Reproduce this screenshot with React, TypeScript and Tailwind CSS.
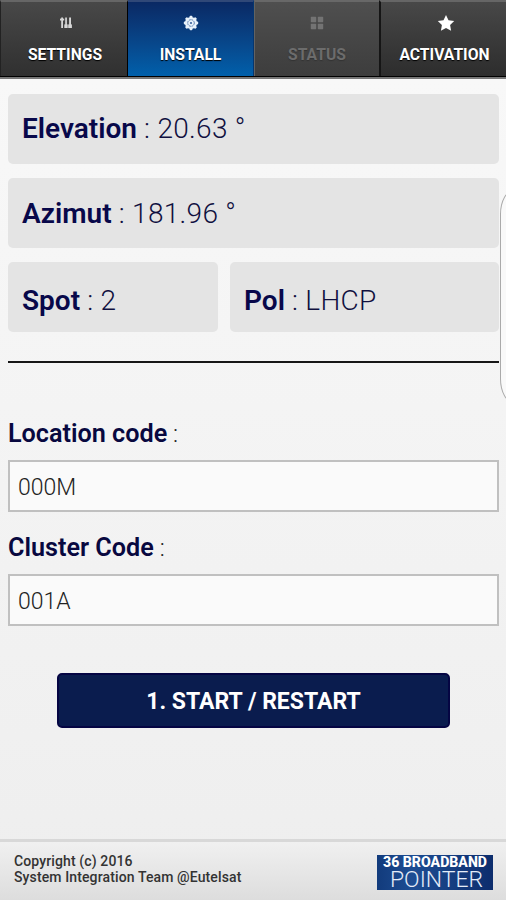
import type { ReactNode } from 'react';

function SlidersIcon() {
  return (
    <svg viewBox="0 0 12 12" className="ml-0.5 size-3" fill="#d6d6d6">
      <rect x="1.2" y="0.5" width="1.8" height="10.5" />
      <rect x="0" y="1.6" width="4.2" height="1.9" />
      <rect x="5.2" y="0.5" width="1.7" height="10.5" />
      <rect x="4.3" y="7.4" width="3.4" height="3.6" />
      <rect x="9.1" y="0.5" width="1.9" height="10.5" />
      <rect x="8.2" y="7.4" width="3.7" height="3.6" />
    </svg>
  );
}

function GearIcon() {
  return (
    <svg viewBox="0 0 16 16" className="size-4">
      <g fill="#e8f2fb">
        <circle cx="8" cy="8" r="6.1" />
        <rect x="6.6" y="0.8" width="2.8" height="14.4" rx="0.8" />
        <rect x="6.6" y="0.8" width="2.8" height="14.4" rx="0.8" transform="rotate(45 8 8)" />
        <rect x="6.6" y="0.8" width="2.8" height="14.4" rx="0.8" transform="rotate(90 8 8)" />
        <rect x="6.6" y="0.8" width="2.8" height="14.4" rx="0.8" transform="rotate(135 8 8)" />
      </g>
      <circle cx="8" cy="8" r="3.3" fill="none" stroke="#4c72a8" strokeWidth="0.9" strokeDasharray="1.9 0.7" />
      <circle cx="8" cy="8" r="1.1" fill="#3a629d" />
    </svg>
  );
}

function GridIcon() {
  return (
    <svg viewBox="0 0 14 14" className="size-3.5" fill="#737373">
      <rect x="0.8" y="0.8" width="5.4" height="5.4" rx="0.6" />
      <rect x="7.8" y="0.8" width="5.4" height="5.4" rx="0.6" />
      <rect x="0.8" y="7.8" width="5.4" height="5.4" rx="0.6" />
      <rect x="7.8" y="7.8" width="5.4" height="5.4" rx="0.6" />
    </svg>
  );
}

function StarIcon() {
  return (
    <svg viewBox="0 0 18 18" className="ml-0.5 size-[18px]" fill="#fff">
      <path d="M9 1l2.5 5.2 5.7.8-4.1 4 1 5.7L9 14l-5.1 2.7 1-5.7-4.1-4 5.7-.8z" />
    </svg>
  );
}

function Tab({ icon, label, className }: { icon: ReactNode; label: string; className: string }) {
  return (
    <div className={`flex h-full flex-col items-center border-t-2 pt-3 ${className}`}>
      <div className="flex h-[18px] items-center justify-center">{icon}</div>
      <span className="mt-3 text-[15.7px] leading-[22px] font-bold whitespace-nowrap">{label}</span>
    </div>
  );
}

function Card({ label, value, className }: { label: string; value: string; className?: string }) {
  return (
    <div className={`flex h-[69.5px] items-center rounded-[5px] bg-[#e4e4e4] px-3.5 text-[28px] leading-8 whitespace-pre text-[#10103f] ${className}`}>
      <span className="font-semibold text-[#08084a]">{label}</span>
      <span className="font-light tracking-[0.3px]"> : {value}</span>
    </div>
  );
}

function Field({ label, value }: { label: string; value: string }) {
  return (
    <label className="block">
      <span className="block h-[42px] text-[25.2px] leading-8 whitespace-pre text-[#222]">
        <span className="font-semibold text-[#08083f]">{label}</span>
        <span className="text-[24px] font-light"> :</span>
      </span>
      <span className="flex h-[52px] items-center border-2 border-[#c0c0c0] bg-[#fafafa] px-2 pt-1 text-[23px] font-light text-[#222]">
        {value}
      </span>
    </label>
  );
}

export default function App() {
  return (
    <div className="relative flex h-[900px] w-[506px] flex-col overflow-hidden bg-linear-to-b from-[#f9f9f9] to-[#eeeeee] font-['Roboto',sans-serif]">
      {/* Tab bar */}
      <nav className="grid h-[79px] shrink-0 grid-cols-[128px_126px_125px_127px] border-b-2 border-[#777] bg-black pb-px text-white [text-shadow:0_1px_1px_#000]">
        <Tab
          icon={<SlidersIcon />}
          label="SETTINGS"
          className="border-x border-t-[#666] border-l-[#222] border-r-black bg-linear-to-b from-[#484848] to-[#303030] pl-0.5"
        />
        <Tab
          icon={<GearIcon />}
          label="INSTALL"
          className="border-r border-t-[#304878] border-r-[#05366f] bg-linear-to-b from-[#0a2964] to-[#0060ab]"
        />
        <Tab
          icon={<GridIcon />}
          label="STATUS"
          className="border-l border-t-[#686868] border-l-[#626262] bg-linear-to-b from-[#4f4f4f] to-[#3d3d3d] text-[#6c6c6c] [text-shadow:0_1px_1px_#333]"
        />
        <Tab
          icon={<StarIcon />}
          label="ACTIVATION"
          className="border-l-2 border-t-[#666] border-l-[#151515] bg-linear-to-b from-[#484848] to-[#2d2d2d] pl-0.5"
        />
      </nav>

      <main className="flex-1 pt-[15px] pr-[7px] pl-2">
        <div className="space-y-[14.5px]">
          <Card label="Elevation" value="20.63 °" className="pt-px" />
          <Card label="Azimut" value="181.96 °" className="pt-0.5" />
          <div className="grid grid-cols-[210px_1fr] gap-3">
            <Card label="Spot" value="2" className="pt-2" />
            <Card label="Pol" value="LHCP" className="pt-2" />
          </div>
        </div>

        <hr className="mt-[29.5px] border-t-2 border-[#171717]" />

        <div className="mt-[55px] space-y-5">
          <Field label="Location code" value="000M" />
          <Field label="Cluster Code" value="001A" />
        </div>

        <button className="mt-[47px] ml-[49px] block h-[55px] w-[393px] rounded-[5px] border-2 border-[#050543] bg-[#0a1c4e] pt-[3px] text-[23px] font-bold text-white">
          1. START / RESTART
        </button>
      </main>

      <footer className="flex h-[61px] shrink-0 justify-between border-t-3 border-[#d8d8d8] bg-linear-to-b from-[#f0f0f0] to-[#dddddd] pr-[13px] pl-[14px]">
        <p className="mt-3 text-[14px] leading-[15.5px] font-medium tracking-[0.12px] text-[#333]">
          Copyright (c) 2016
          <br />
          System Integration Team @Eutelsat
        </p>
        <svg viewBox="0 0 116 35" className="mt-[13px] h-[35px] w-[116px] overflow-visible">
          <defs>
            <linearGradient id="logo" x1="0" x2="1">
              <stop offset="0" stopColor="#123b7c" />
              <stop offset="0.3" stopColor="#1d4d93" />
              <stop offset="1" stopColor="#0d2d6d" />
            </linearGradient>
          </defs>
          <rect width="116" height="35" fill="url(#logo)" />
          <text x="6" y="12" fontSize="14" fontWeight="800" fill="#fff" textLength="104" lengthAdjust="spacingAndGlyphs">
            36 BROADBAND
          </text>
          <text x="13" y="32" fontSize="22" fontWeight="300" fill="#e4ecf8" textLength="93" lengthAdjust="spacingAndGlyphs">
            POINTER
          </text>
        </svg>
      </footer>

      {/* Edge panel handle, mostly off screen */}
      <div className="absolute top-[190px] left-[500px] h-[213px] w-10 rounded-[14px/24px] border border-[#aaa] bg-[#f9f9f9]" />
    </div>
  );
}
